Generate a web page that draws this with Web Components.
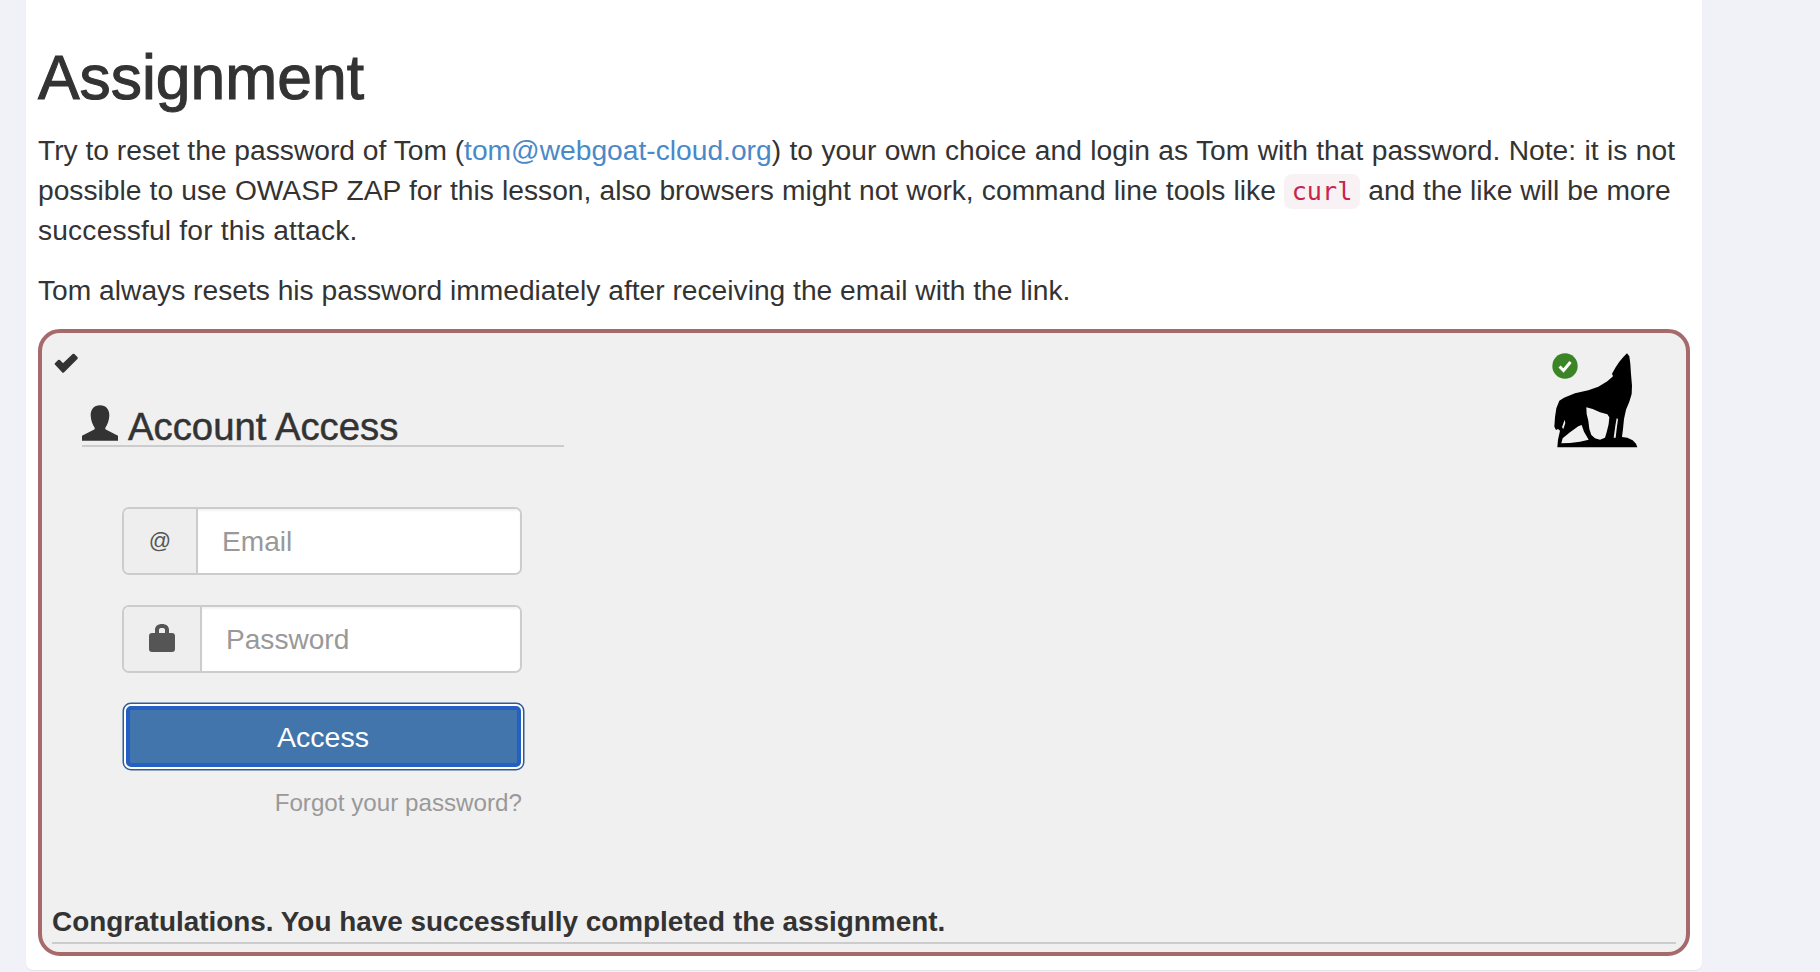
<!DOCTYPE html>
<html>
<head>
<meta charset="utf-8">
<title>Assignment</title>
<style>
    html, body { margin: 0; height: 100%; overflow: hidden; }
    body {
        background: #f0f2f7;
        color: #333;
        font-family: "Liberation Sans", Arial, sans-serif;
    }
</style>
</head>
<body>
<lesson-page>
    <lesson-text>
        <h-title slot="title">Assignment</h-title>
    </lesson-text>
    <attack-box>
        <login-form></login-form>
    </attack-box>
</lesson-page>

<script>
class LessonPage extends HTMLElement {
    connectedCallback() {
        this.attachShadow({ mode: 'open' });
        this.shadowRoot.innerHTML = `
            <style>
                :host {
                    display: block;
                    box-sizing: border-box;
                    width: 1676px;
                    height: 970px;
                    margin-left: 26px;
                    padding: 45px 12px 0 12px;
                    background: #fff;
                    border-radius: 0 0 7px 7px;
                    box-shadow: 0 1px 1px rgba(0, 0, 0, .06);
                }
            </style>
            <slot></slot>
        `;
    }
}

class HTitle extends HTMLElement {
    connectedCallback() {
        this.attachShadow({ mode: 'open' });
        this.shadowRoot.innerHTML = `
            <style>
                :host {
                    display: block;
                    font-size: 62.4px;
                    font-weight: 500;
                    line-height: 66px;
                    margin-bottom: 20px;
                    -webkit-text-stroke: 1.1px #333;
                }
            </style>
            <slot></slot>
        `;
    }
}

class LessonText extends HTMLElement {
    connectedCallback() {
        this.attachShadow({ mode: 'open' });
        this.shadowRoot.innerHTML = `
            <style>
                :host {
                    display: block;
                    font-size: 28.2px;
                    line-height: 39.7px;
                }
                p { margin: 0 0 20px 0; }
                p.last { margin-bottom: 18px; }
                a { color: #4a89c8; text-decoration: none; }
                .l1 { word-spacing: .62px; }
                .l2 { word-spacing: .34px; }
                .l3 { letter-spacing: .17px; }
                code {
                    font-family: "DejaVu Sans Mono", "Liberation Mono", monospace;
                    font-size: 25.2px;
                    color: #c7254e;
                    background: #f9f2f4;
                    padding: 3px 8px;
                    border-radius: 8px;
                }
            </style>
            <slot name="title"></slot>
            <p><span>Try to reset the password of Tom (</span><a href="#">tom@webgoat-cloud.org</a><span class="l1">) to your own choice and login as Tom with that password. Note: it is not</span> <span class="l2">possible to use OWASP ZAP for this lesson, also browsers might not work, command line tools like</span> <code>curl</code> <span>and the like will be more</span> <span class="l3">successful for this attack.</span></p>
            <p class="last">Tom always resets his password immediately after receiving the email with the link.</p>
        `;
    }
}

class AttackBox extends HTMLElement {
    connectedCallback() {
        this.attachShadow({ mode: 'open' });
        this.shadowRoot.innerHTML = `
            <style>
                :host {
                    display: block;
                    position: relative;
                    box-sizing: border-box;
                    width: 1652px;
                    height: 627px;
                    background: #f0f0f0;
                    border: 4px solid #a66a6a;
                    border-radius: 22px;
                    padding: 20px 9px 0 9px;
                }
                .check { display: block; width: 24px; height: 20px; margin-left: 3px; }
                .wolf { position: absolute; left: 1508px; top: 16px; width: 90px; height: 100px; }
                .done { position: absolute; left: 1510px; top: 20px; width: 26px; height: 26px; }
                .feedback {
                    position: absolute;
                    left: 10px;
                    right: 10px;
                    bottom: 8px;
                    font-size: 27.9px;
                    font-weight: bold;
                    line-height: 36px;
                    padding-bottom: 2px;
                    border-bottom: 2px solid #ccc;
                }
            </style>
            <svg class="check" viewBox="0 0 24 20"><path d="M2 11 L5 8 L9 12 L19.500 2 L22.500 5 L9 18.500 Z" fill="#333" stroke="#333" stroke-width="2.500" stroke-linejoin="round"/></svg>
            <svg class="wolf" viewBox="0 0 270 300"><path fill="#000" fill-rule="evenodd" d="M231 13 L238 22 L241 45 L243 75 L246 110 L245 135 L238 158 L228 182 L222 210 L219 240 L216 264 L232 266 L248 274 L258 284 L262 295 L22 295 L24 272 L30 245 L24 240 L18 243 L13 233 L15 205 L19 178 L28 155 L42 146 L75 133 L115 124 L145 113 L172 97 L189 82 L186 74 L197 55 L208 38 L222 22 Z M109 175 L128 180 L150 190 L172 196 L178 205 L176 225 L170 250 L165 266 L150 272 L135 268 L124 258 L118 240 L115 215 L110 195 Z M191 266 L196 230 L200 208 L204 210 L200 240 L197 266 Z M34 283 L38 268 L60 250 L85 232 L95 228 L102 248 L116 272 L90 278 L60 282 Z M36 235 L44 212 L46 222 L40 240 Z"/></svg>
            <svg class="done" viewBox="0 0 26 26"><circle cx="13" cy="13" r="12.700" fill="#3c8527"/><path d="M7.500 13.500 L11.500 17.500 L18.500 9" fill="none" stroke="#fff" stroke-width="3"/></svg>
            <slot></slot>
            <div class="feedback">Congratulations. You have successfully completed the assignment.</div>
        `;
    }
}

class LoginForm extends HTMLElement {
    connectedCallback() {
        this.attachShadow({ mode: 'open' });
        this.shadowRoot.innerHTML = `
            <style>
                :host { display: block; margin-left: 31px; width: 482px; }
                h4 {
                    display: flex;
                    align-items: flex-end;
                    gap: 10px;
                    margin: 27px 0 0 0;
                    height: 45px;
                    font-size: 38.3px;
                    font-weight: normal;
                    line-height: 40px;
                    border-bottom: 2px solid #ccc;
                    -webkit-text-stroke: .5px #333;
                }
                h4 span { margin-bottom: -2px; }
                h4 svg { width: 36px; height: 36px; margin-bottom: 4px; }
                .fields {
                    display: flex;
                    flex-direction: column;
                    width: 402px;
                    margin: 60px 0 0 40px;
                }
                .group {
                    display: flex;
                    box-sizing: border-box;
                    width: 400px;
                    height: 68px;
                    border: 2px solid #ccc;
                    border-radius: 7px;
                    overflow: hidden;
                    background: #fff;
                    font-size: 28.1px;
                }
                .group.mail { margin-bottom: 30px; }
                .addon {
                    display: flex;
                    align-items: center;
                    justify-content: center;
                    box-sizing: border-box;
                    background: #eee;
                    border-right: 2px solid #ccc;
                    color: #555;
                    font-size: 22px;
                }
                .mail .addon { width: 74px; }
                .pass .addon { width: 78px; }
                .addon svg { width: 28px; height: 30px; margin-bottom: 2px; }
                input {
                    flex: 1;
                    min-width: 0;
                    border: 0;
                    outline: 0;
                    padding: 2px 24px 0 24px;
                    font: inherit;
                    background: #fff;
                    box-shadow: inset 0 2px 2px rgba(0, 0, 0, .05);
                }
                input::placeholder { color: #999; opacity: 1; }
                button {
                    box-sizing: border-box;
                    width: 395px;
                    height: 61px;
                    margin: 33.500px 0 3.500px 3.500px;
                    padding: 2px 0 0 0;
                    border: 4px solid #245fc4;
                    border-radius: 5px;
                    background: #4375ad;
                    color: #fff;
                    font: 28.500px "Liberation Sans", Arial, sans-serif;
                    box-shadow: 0 0 0 2px #fff, 0 0 0 3.500px #2e5c94;
                }
                .forgot {
                    display: block;
                    margin-top: 16px;
                    margin-right: 2px;
                    text-align: right;
                    font-size: 24.200px;
                    line-height: 32px;
                    color: #999;
                    text-decoration: none;
                }
            </style>
            <h4>
                <svg viewBox="0 0 108 107"><path fill="#333" d="M54 0 C72 0 82 12 82 30 C82 45 76 58 70 68 V72 L108 92 V107 H0 V92 L38 72 V68 C32 58 26 45 26 30 C26 12 36 0 54 0 Z"/></svg>
                <span>Account Access</span>
            </h4>
            <div class="fields">
                <div class="group mail">
                    <span class="addon">@</span>
                    <input type="text" placeholder="Email">
                </div>
                <div class="group pass">
                    <span class="addon">
                        <svg viewBox="0 0 28 30"><path fill="#555" fill-rule="evenodd" d="M7 10 V7 C7 3 10 1 14 1 C18 1 21 3 21 7 V10 H24 C26 10 27 11 27 13 V26 C27 28 26 29 24 29 H4 C2 29 1 28 1 26 V13 C1 11 2 10 4 10 Z M11 10 H17 V7 C17 5.500 16 5 14 5 C12 5 11 5.500 11 7 Z"/></svg>
                    </span>
                    <input type="password" placeholder="Password">
                </div>
                <button type="button">Access</button>
                <a class="forgot" href="#">Forgot your password?</a>
            </div>
        `;
    }
}

customElements.define('h-title', HTitle);
customElements.define('lesson-text', LessonText);
customElements.define('attack-box', AttackBox);
customElements.define('login-form', LoginForm);
customElements.define('lesson-page', LessonPage);
</script>
</body>
</html>
